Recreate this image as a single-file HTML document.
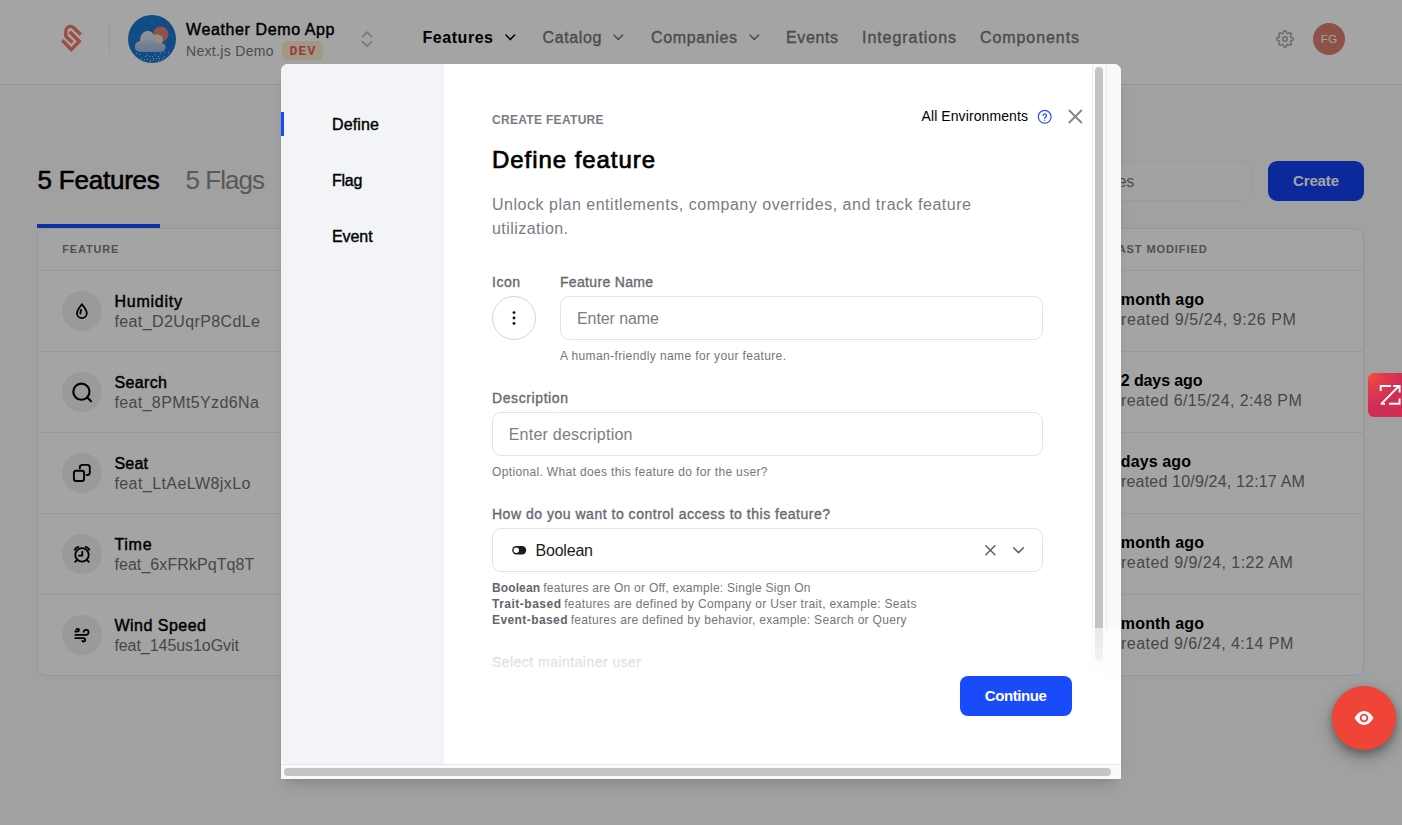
<!DOCTYPE html>
<html lang="en">
<head>
<meta charset="utf-8">
<title>Features</title>
<style>
*{box-sizing:border-box;margin:0;padding:0}
html,body{width:1402px;height:825px;overflow:hidden}
body{font-family:"Liberation Sans",sans-serif;background:#fafafa;color:#000;position:relative}
.abs{position:absolute;white-space:nowrap}
#hdr{position:absolute;left:0;top:0;width:1402px;height:85px;background:#fff;border-bottom:1px solid #e8e9ec}
#tbl{position:absolute;left:37px;top:228px;width:1327px;height:448px;background:#fff;border:1px solid #e9eaed;border-radius:9px}
.rl{position:absolute;left:38px;width:1325px;height:1px;background:#eeeff1}
.ic{position:absolute;left:62px;width:40px;height:40px;border-radius:50%;background:#edeff3}
#ovl{position:absolute;left:0;top:0;width:1402px;height:825px;background:rgba(0,0,0,.356)}
#modal{position:absolute;left:281px;top:64px;width:840px;height:715px;background:#fff;border-radius:7px 7px 0 0;box-shadow:0 10px 15px -6px rgba(0,0,0,.15),0 4px 6px -4px rgba(0,0,0,.1)}
#mclip{position:absolute;left:0;top:0;width:840px;height:715px;border-radius:7px 7px 0 0;overflow:hidden}
#side{position:absolute;left:0;top:0;width:163px;height:700px;background:#f3f4f8;border-radius:0 0 0 6px}
.inp{position:absolute;border:1px solid #e4e4e8;border-radius:9px;background:#fff}
</style>
</head>
<body>
<div id="hdr"></div>
<svg class="abs" style="left:56px;top:20px" width="32" height="36" viewBox="56 20 32 36" fill="none" stroke="#f27a66" stroke-width="3.4" stroke-linejoin="miter"><path d="M80.800 34.600 L73.700 27.700 C71.600 25.900 68.600 26.300 67.100 27.900 C66.100 29.100 65.800 30.100 65.800 32 L65.800 36.300 L72.400 42.600"/><path d="M69.700 31.700 L79.300 41.300 L71.300 49.600 L62.200 40.300"/></svg>
<div class="abs" style="left:109px;top:24px;width:1px;height:29px;background:#e9ecf2"></div>
<svg class="abs" style="left:128px;top:14.7px" width="48" height="48" viewBox="0 0 48 48"><defs><linearGradient id="cg" x1="0" y1="0" x2="0" y2="1"><stop offset="0" stop-color="#e4e6ec"/><stop offset=".4" stop-color="#d3dbea"/><stop offset=".62" stop-color="#b6c8e8"/><stop offset="1" stop-color="#9fb9e4"/></linearGradient></defs><circle cx="24" cy="24" r="24" fill="#1d76d0"/><circle cx="32.7" cy="19.2" r="7.7" fill="#e47e6f"/><circle cx="29.3" cy="24.8" r="5.6" fill="#eadccb"/><path d="M12.500 37 C8.500 37 6.800 34 6.800 31.500 C6.800 28.500 9 26.500 12 26 C12 20 15.500 16 19.500 16 C23.500 16 25.500 18.500 26 21.500 C27 24.500 28.500 27.500 31 28.200 L34.500 28.200 C36.500 28.700 37.500 30.500 37.500 32 C37.500 35 35 37 32 37 Z" fill="url(#cg)"/><g fill="#cbdcf3"><circle cx="8.5" cy="38.5" r=".62"/><circle cx="11.5" cy="39.5" r=".62"/><circle cx="27" cy="39.5" r=".62"/><circle cx="32.5" cy="38.5" r=".62"/><circle cx="37" cy="37.6" r=".62"/><circle cx="40.5" cy="37.6" r=".62"/><circle cx="17.5" cy="41.5" r=".62"/><circle cx="19" cy="40.5" r=".62"/><circle cx="21.5" cy="41.5" r=".62"/><circle cx="24.5" cy="41.5" r=".62"/><circle cx="30.5" cy="41.5" r=".62"/><circle cx="36.5" cy="41.5" r=".62"/><circle cx="13.5" cy="43.5" r=".62"/><circle cx="16.5" cy="44.5" r=".62"/><circle cx="19.5" cy="44.5" r=".62"/><circle cx="22.5" cy="44.8" r=".62"/><circle cx="25.5" cy="43.5" r=".62"/><circle cx="28.5" cy="43.5" r=".62"/><circle cx="31.5" cy="43.5" r=".62"/><circle cx="34.5" cy="43.5" r=".62"/><circle cx="22.5" cy="46.5" r=".62"/><circle cx="25.5" cy="45.5" r=".62"/><circle cx="30.5" cy="45.5" r=".62"/></g></svg>
<div class="abs" style="left:186.0px;top:20.00px;font-size:16px;line-height:20px;color:#000;font-weight:400;letter-spacing:0.611px;-webkit-text-stroke:0.45px #000;">Weather Demo App</div>
<div class="abs" style="left:186.0px;top:42.00px;font-size:14px;line-height:18px;color:#777;letter-spacing:0.325px;">Next.js Demo</div>
<div class="abs" style="left:282px;top:41px;width:41px;height:19px;border-radius:5px;background:#fdecd0;color:#e8604f;font-family:'Liberation Mono',monospace;font-weight:700;font-size:13px;line-height:21px;text-align:center;letter-spacing:1.2px;padding-left:1.2px">DEV</div>
<svg class="abs" style="left:359px;top:28px" width="16" height="22" viewBox="359 28 16 22" fill="none" stroke="#b6bcd4" stroke-width="1.8" stroke-linecap="round" stroke-linejoin="round"><path d="M362.6 36.6 L367 32.2 L371.4 36.6"/><path d="M362.6 41.8 L367 46.2 L371.4 41.8"/></svg>
<div class="abs" style="left:422.5px;top:28.00px;font-size:16px;line-height:20px;color:#000;font-weight:700;letter-spacing:0.544px;">Features</div>
<div class="abs" style="left:542.5px;top:28.00px;font-size:16px;line-height:20px;color:#757575;font-weight:400;letter-spacing:0.642px;-webkit-text-stroke:0.35px #757575;">Catalog</div>
<div class="abs" style="left:651.0px;top:28.00px;font-size:16px;line-height:20px;color:#757575;font-weight:400;letter-spacing:0.634px;-webkit-text-stroke:0.35px #757575;">Companies</div>
<div class="abs" style="left:786.0px;top:28.00px;font-size:16px;line-height:20px;color:#757575;font-weight:400;letter-spacing:0.617px;-webkit-text-stroke:0.35px #757575;">Events</div>
<div class="abs" style="left:862.0px;top:28.00px;font-size:16px;line-height:20px;color:#757575;font-weight:400;letter-spacing:0.945px;-webkit-text-stroke:0.35px #757575;">Integrations</div>
<div class="abs" style="left:980.0px;top:28.00px;font-size:16px;line-height:20px;color:#757575;font-weight:400;letter-spacing:0.920px;-webkit-text-stroke:0.35px #757575;">Components</div>
<svg class="abs" style="left:503.7px;top:33.4px" width="12.6" height="8.6" viewBox="-2 -2 12.6 8.6" fill="none" stroke="#000" stroke-width="1.5" stroke-linecap="round" stroke-linejoin="round"><path d="M0 0 L4.30 4.60 L8.60 0"/></svg>
<svg class="abs" style="left:612.2px;top:33.4px" width="12.6" height="8.6" viewBox="-2 -2 12.6 8.6" fill="none" stroke="#757575" stroke-width="1.5" stroke-linecap="round" stroke-linejoin="round"><path d="M0 0 L4.30 4.60 L8.60 0"/></svg>
<svg class="abs" style="left:747.7px;top:33.4px" width="12.6" height="8.6" viewBox="-2 -2 12.6 8.6" fill="none" stroke="#757575" stroke-width="1.5" stroke-linecap="round" stroke-linejoin="round"><path d="M0 0 L4.30 4.60 L8.60 0"/></svg>
<svg class="abs" style="left:1276.1px;top:29.9px" width="18" height="18" viewBox="0 0 24 24" fill="none" stroke="#a6a6a6" stroke-width="2" stroke-linecap="round" stroke-linejoin="round"><circle cx="12" cy="12" r="3"/><path d="M19.4 15a1.65 1.65 0 0 0 .33 1.82l.06.06a2 2 0 1 1-2.83 2.83l-.06-.06a1.65 1.65 0 0 0-1.82-.33 1.65 1.65 0 0 0-1 1.51V21a2 2 0 0 1-4 0v-.09A1.65 1.65 0 0 0 9 19.4a1.65 1.65 0 0 0-1.82.33l-.06.06a2 2 0 1 1-2.83-2.83l.06-.06a1.65 1.65 0 0 0 .33-1.82 1.65 1.65 0 0 0-1.510-1H3a2 2 0 0 1 0-4h.09A1.65 1.65 0 0 0 4.600 9a1.65 1.65 0 0 0-.33-1.82l-.06-.06a2 2 0 1 1 2.83-2.83l.06.06a1.65 1.65 0 0 0 1.82.33H9a1.65 1.65 0 0 0 1-1.51V3a2 2 0 0 1 4 0v.09a1.65 1.65 0 0 0 1 1.51 1.65 1.65 0 0 0 1.820-.33l.06-.06a2 2 0 1 1 2.83 2.83l-.06.06a1.65 1.65 0 0 0-.33 1.820V9a1.65 1.65 0 0 0 1.510 1H21a2 2 0 0 1 0 4h-.09a1.65 1.65 0 0 0-1.510 1z"/></svg>
<div class="abs" style="left:1313px;top:23px;width:32px;height:32px;border-radius:50%;background:#dc7e6f;color:#fff;font-size:11.5px;line-height:33px;text-align:center;letter-spacing:.5px;padding-left:.5px">FG</div>
<div class="abs" style="left:37.5px;top:164.00px;font-size:26px;line-height:32px;color:#000;font-weight:400;letter-spacing:-0.220px;-webkit-text-stroke:0.6px #000;">5 Features</div>
<div class="abs" style="left:185.5px;top:164.00px;font-size:26px;line-height:32px;color:#8a8a8a;letter-spacing:-0.960px;">5 Flags</div>
<div class="abs" style="left:37px;top:224px;width:123px;height:4px;background:#194bfb"></div>
<div class="abs" style="left:1000px;top:161px;width:252px;height:40px;border-radius:9px;background:#fcfcfd;border:1px solid #f1f2f5"></div>
<div class="abs" style="left:1021.4px;top:172.00px;font-size:16px;line-height:20px;color:#787878;">Search features</div>
<div class="abs" style="left:1268px;top:161px;width:96px;height:40px;border-radius:9px;background:#1240f0"></div>
<div class="abs" style="left:1293.0px;top:171.00px;font-size:15px;line-height:19px;color:#fff;font-weight:700;letter-spacing:-0.138px;">Create</div>
<div id="tbl"></div>
<div class="abs" style="left:62.3px;top:242.00px;font-size:11px;line-height:14px;color:#7d7d7d;font-weight:700;letter-spacing:0.812px;">FEATURE</div>
<div class="abs" style="left:1110.0px;top:242.00px;font-size:11px;line-height:14px;color:#7d7d7d;font-weight:700;letter-spacing:0.921px;">LAST MODIFIED</div>
<div class="rl" style="top:270px"></div>
<div class="rl" style="top:351px"></div>
<div class="rl" style="top:432px"></div>
<div class="rl" style="top:513px"></div>
<div class="rl" style="top:594px"></div>
<div class="rl" style="top:-99px"></div>
<div class="ic" style="top:291px"><svg style="position:absolute;left:0;top:0" width="40" height="40" viewBox="0 0 40 40" fill="none" stroke="#000" stroke-linecap="round" stroke-linejoin="round"><g stroke-width="1.8"><path d="M19.900 13.200 C18 16 15 18.800 15 22.200 a4.900 4.900 0 0 0 9.800 0 C24.800 18.800 21.800 16 19.900 13.200 Z"/><path d="M19.100 18.900 L18.300 22.500"/></g></svg></div>
<div class="abs" style="left:114.4px;top:292.00px;font-size:16px;line-height:20px;color:#000;font-weight:400;letter-spacing:0.767px;-webkit-text-stroke:0.45px #000;">Humidity</div>
<div class="abs" style="left:114.4px;top:312.00px;font-size:16px;line-height:20px;color:#6f6f6f;letter-spacing:0.397px;">feat_D2UqrP8CdLe</div>
<div class="abs" style="left:1107.1px;top:290.00px;font-size:16px;line-height:20px;color:#000;font-weight:700;letter-spacing:0.192px;">1 month ago</div>
<div class="abs" style="left:1108.9px;top:310.00px;font-size:16px;line-height:20px;color:#6f6f6f;letter-spacing:0.573px;">Created 9/5/24, 9:26 PM</div>
<div class="ic" style="top:372px"><svg style="position:absolute;left:0;top:0" width="40" height="40" viewBox="0 0 40 40" fill="none" stroke="#000" stroke-linecap="round" stroke-linejoin="round"><g stroke-width="2.1"><circle cx="19.400" cy="19.700" r="8.100"/><path d="M25.300 25.600 L29 29.300"/></g></svg></div>
<div class="abs" style="left:114.4px;top:373.00px;font-size:16px;line-height:20px;color:#000;font-weight:400;letter-spacing:0.381px;-webkit-text-stroke:0.45px #000;">Search</div>
<div class="abs" style="left:114.4px;top:393.00px;font-size:16px;line-height:20px;color:#6f6f6f;letter-spacing:0.377px;">feat_8PMt5Yzd6Na</div>
<div class="abs" style="left:1112.0px;top:371.00px;font-size:16px;line-height:20px;color:#000;font-weight:700;letter-spacing:-0.111px;">12 days ago</div>
<div class="abs" style="left:1109.0px;top:391.00px;font-size:16px;line-height:20px;color:#6f6f6f;letter-spacing:0.415px;">Created 6/15/24, 2:48 PM</div>
<div class="ic" style="top:453px"><svg style="position:absolute;left:0;top:0" width="40" height="40" viewBox="0 0 40 40" fill="none" stroke="#000" stroke-linecap="round" stroke-linejoin="round"><g stroke-width="1.9"><rect x="11.900" y="17.700" width="10.200" height="10.300" rx="2.300"/><path d="M17.800 15.200 V14.500 a2.600 2.600 0 0 1 2.600 -2.600 H25.200 a2.600 2.600 0 0 1 2.600 2.600 V19.400 a2.600 2.600 0 0 1 -2.600 2.600 H24.500"/></g></svg></div>
<div class="abs" style="left:114.4px;top:454.00px;font-size:16px;line-height:20px;color:#000;font-weight:400;letter-spacing:0.229px;-webkit-text-stroke:0.45px #000;">Seat</div>
<div class="abs" style="left:114.4px;top:474.00px;font-size:16px;line-height:20px;color:#6f6f6f;letter-spacing:0.436px;">feat_LtAeLW8jxLo</div>
<div class="abs" style="left:1107.2px;top:452.00px;font-size:16px;line-height:20px;color:#000;font-weight:700;letter-spacing:0.120px;">7 days ago</div>
<div class="abs" style="left:1109.3px;top:472.00px;font-size:16px;line-height:20px;color:#6f6f6f;letter-spacing:0.179px;">Created 10/9/24, 12:17 AM</div>
<div class="ic" style="top:534px"><svg style="position:absolute;left:0;top:0" width="40" height="40" viewBox="0 0 40 40" fill="none" stroke="#000" stroke-linecap="round" stroke-linejoin="round"><g stroke-width="1.8"><circle cx="20" cy="20.900" r="6.700"/><path d="M16.900 21.600 H20.300 V17.600"/><path d="M12.800 15.700 Q13.900 13.500 16.200 12.900" stroke-width="2"/><path d="M23.800 12.900 Q26.100 13.500 27.200 15.700" stroke-width="2"/><path d="M14.600 26.500 L13.200 27.900"/><path d="M25.400 26.500 L26.800 27.900"/></g></svg></div>
<div class="abs" style="left:114.4px;top:535.00px;font-size:16px;line-height:20px;color:#000;font-weight:400;letter-spacing:0.746px;-webkit-text-stroke:0.45px #000;">Time</div>
<div class="abs" style="left:114.4px;top:555.00px;font-size:16px;line-height:20px;color:#6f6f6f;letter-spacing:0.078px;">feat_6xFRkPqTq8T</div>
<div class="abs" style="left:1107.1px;top:533.00px;font-size:16px;line-height:20px;color:#000;font-weight:700;letter-spacing:0.179px;">1 month ago</div>
<div class="abs" style="left:1109.0px;top:553.00px;font-size:16px;line-height:20px;color:#6f6f6f;letter-spacing:0.472px;">Created 9/9/24, 1:22 AM</div>
<div class="ic" style="top:615px"><svg style="position:absolute;left:0;top:0" width="40" height="40" viewBox="0 0 40 40" fill="none" stroke="#000" stroke-linecap="round" stroke-linejoin="round"><g stroke-width="1.8"><path d="M13.300 16.500 H15.600 a1.350 1.350 0 1 0 -1.100 -2.100"/><path d="M13.300 19.800 H24.100 a2.450 2.450 0 1 0 -2.400 -2.900"/><path d="M13.300 23.200 H21.600 a1.650 1.650 0 1 1 -1.300 2.700"/></g></svg></div>
<div class="abs" style="left:114.4px;top:616.00px;font-size:16px;line-height:20px;color:#000;font-weight:400;letter-spacing:0.493px;-webkit-text-stroke:0.45px #000;">Wind Speed</div>
<div class="abs" style="left:114.4px;top:636.00px;font-size:16px;line-height:20px;color:#6f6f6f;letter-spacing:-0.055px;">feat_145us1oGvit</div>
<div class="abs" style="left:1107.1px;top:614.00px;font-size:16px;line-height:20px;color:#000;font-weight:700;letter-spacing:0.179px;">1 month ago</div>
<div class="abs" style="left:1109.0px;top:634.00px;font-size:16px;line-height:20px;color:#6f6f6f;letter-spacing:0.454px;">Created 9/6/24, 4:14 PM</div>
<div id="ovl"></div>
<div class="abs" style="left:1368px;top:373px;width:40px;height:44px;border-radius:6px;background:radial-gradient(circle at 0 0,#f4503a 0,#e13a4c 30%,#d12e57 55%)"></div>
<svg class="abs" style="left:1378px;top:383px" width="24" height="24" viewBox="1378 383 24 24" fill="none" stroke="#fff" stroke-width="1.9"><path d="M1380.700 391 V386 H1391"/><path d="M1381.300 403.800 L1399 386"/><path d="M1393 386 H1399.600 V392.500" /><path d="M1389 403.800 H1399.600 V398.500"/><path d="M1380.700 403.800 H1385"/></svg>
<div class="abs" style="left:1332px;top:686px;width:64px;height:64px;border-radius:50%;background:#f04438;box-shadow:0 7px 16px rgba(0,0,0,.3),0 3px 7px rgba(0,0,0,.22)"></div>
<svg class="abs" style="left:1352px;top:706px" width="24" height="24" viewBox="0 0 24 24"><path d="M2.500 12 C5 7.300 8.300 5 12 5 s7 2.300 9.500 7 C19 16.700 15.700 19 12 19 S5 16.700 2.500 12Z" fill="#fff"/><circle cx="12" cy="12" r="3.400" fill="none" stroke="#f04438" stroke-width="1.900"/></svg>
<div id="modal"><div id="mclip">
<div id="side"></div>
<div class="abs" style="left:0;top:48px;width:3px;height:24px;background:#194bfb"></div>
<div class="abs" style="left:51.0px;top:51.00px;font-size:16px;line-height:20px;color:#000;font-weight:400;letter-spacing:0.150px;-webkit-text-stroke:0.4px #000;">Define</div>
<div class="abs" style="left:51.0px;top:107.00px;font-size:16px;line-height:20px;color:#000;font-weight:400;letter-spacing:-0.242px;-webkit-text-stroke:0.4px #000;">Flag</div>
<div class="abs" style="left:51.0px;top:163.00px;font-size:16px;line-height:20px;color:#000;font-weight:400;letter-spacing:-0.079px;-webkit-text-stroke:0.4px #000;">Event</div>
<div class="abs" style="left:211.0px;top:49.00px;font-size:12px;line-height:15px;color:#7a7c85;font-weight:700;letter-spacing:0.311px;">CREATE FEATURE</div>
<div class="abs" style="left:211.0px;top:81.00px;font-size:24px;line-height:30px;color:#000;font-weight:400;letter-spacing:0.941px;-webkit-text-stroke:0.7px #000;">Define feature</div>
<div class="abs" style="left:211.0px;top:131.00px;font-size:16px;line-height:20px;color:#7a7c85;letter-spacing:0.519px;">Unlock plan entitlements, company overrides, and track feature</div>
<div class="abs" style="left:211.0px;top:155.00px;font-size:16px;line-height:20px;color:#7a7c85;letter-spacing:0.441px;">utilization.</div>
<div class="abs" style="left:640.5px;top:43.00px;font-size:14px;line-height:18px;color:#000;letter-spacing:0.091px;">All Environments</div>
<svg class="abs" style="left:755px;top:44px" width="18" height="18" viewBox="1036 108 18 18" fill="none" stroke="#2a4bff" stroke-width="1.2" stroke-linecap="round" stroke-linejoin="round"><circle cx="1044.700" cy="116.800" r="6.400"/><path d="M1043.100 115.500 a1.700 1.700 0 1 1 2.400 1.600 c-.55.280-.8.650-.8 1.250"/><path d="M1044.700 120.200 v.1"/></svg>
<svg class="abs" style="left:785px;top:43px" width="18" height="18" viewBox="1066 107 18 18" fill="none" stroke="#858585" stroke-width="1.85" stroke-linecap="round"><path d="M1069.300 110.500 L1081.300 122.500 M1081.300 110.500 L1069.300 122.500"/></svg>
<div class="abs" style="left:211.0px;top:209.00px;font-size:14px;line-height:18px;color:#666a71;font-weight:400;letter-spacing:0.513px;-webkit-text-stroke:0.35px #666a71;">Icon</div>
<div class="abs" style="left:279.0px;top:209.00px;font-size:14px;line-height:18px;color:#666a71;font-weight:400;letter-spacing:0.320px;-webkit-text-stroke:0.35px #666a71;">Feature Name</div>
<div class="abs" style="left:211px;top:232px;width:44px;height:44px;border-radius:50%;border:1px solid #d5d6da;background:#fff"></div>
<svg class="abs" style="left:227px;top:244px" width="12" height="20" viewBox="508 308 12 20" fill="#111"><circle cx="514" cy="312.600" r="1.450"/><circle cx="514" cy="318" r="1.450"/><circle cx="514" cy="323.400" r="1.450"/></svg>
<div class="inp" style="left:279px;top:232px;width:483px;height:44px"></div>
<div class="abs" style="left:296.0px;top:245.00px;font-size:16px;line-height:20px;color:#7a7c85;letter-spacing:-0.079px;">Enter name</div>
<div class="abs" style="left:279.0px;top:285.00px;font-size:12px;line-height:15px;color:#74767d;letter-spacing:0.383px;">A human-friendly name for your feature.</div>
<div class="abs" style="left:211.0px;top:325.00px;font-size:14px;line-height:18px;color:#666a71;font-weight:400;letter-spacing:0.597px;-webkit-text-stroke:0.35px #666a71;">Description</div>
<div class="inp" style="left:211px;top:348px;width:551px;height:44px"></div>
<div class="abs" style="left:227.7px;top:361.00px;font-size:16px;line-height:20px;color:#7a7c85;letter-spacing:0.234px;">Enter description</div>
<div class="abs" style="left:211.0px;top:401.00px;font-size:12px;line-height:15px;color:#74767d;letter-spacing:0.348px;">Optional. What does this feature do for the user?</div>
<div class="abs" style="left:211.0px;top:441.00px;font-size:14px;line-height:18px;color:#666a71;font-weight:400;letter-spacing:0.514px;-webkit-text-stroke:0.35px #666a71;">How do you want to control access to this feature?</div>
<div class="inp" style="left:211px;top:464px;width:551px;height:44px"></div>
<svg class="abs" style="left:229px;top:479px" width="18" height="14" viewBox="510 543 18 14"><rect x="512.200" y="546.100" width="14" height="8.400" rx="4.200" fill="#1c1c1c"/><circle cx="516.300" cy="550.300" r="2.700" fill="#fff"/></svg>
<div class="abs" style="left:254.5px;top:477.00px;font-size:16px;line-height:20px;color:#1c1c1c;letter-spacing:-0.203px;">Boolean</div>
<svg class="abs" style="left:702px;top:479px" width="14" height="14" viewBox="983 543 14 14" fill="none" stroke="#606060" stroke-width="1.450" stroke-linecap="round"><path d="M985.900 545.700 L994.900 554.700 M994.900 545.700 L985.900 554.700"/></svg>
<svg class="abs" style="left:729px;top:479px" width="16" height="14" viewBox="1010 543 16 14" fill="none" stroke="#606060" stroke-width="1.500" stroke-linecap="round" stroke-linejoin="round"><path d="M1013.600 547.700 L1018.500 552.600 L1023.400 547.700"/></svg>
<div class="abs" style="left:211.0px;top:517.00px;font-size:12px;line-height:15px;color:#62656c;font-weight:700;letter-spacing:0.111px;">Boolean</div>
<div class="abs" style="left:262.2px;top:517.00px;font-size:12px;line-height:15px;color:#74767d;letter-spacing:0.262px;">features are On or Off, example: Single Sign On</div>
<div class="abs" style="left:211.0px;top:533.00px;font-size:12px;line-height:15px;color:#62656c;font-weight:700;letter-spacing:0.498px;">Trait-based</div>
<div class="abs" style="left:283.2px;top:533.00px;font-size:12px;line-height:15px;color:#74767d;letter-spacing:0.324px;">features are defined by Company or User trait, example: Seats</div>
<div class="abs" style="left:211.0px;top:549.00px;font-size:12px;line-height:15px;color:#62656c;font-weight:700;letter-spacing:0.415px;">Event-based</div>
<div class="abs" style="left:289.7px;top:549.00px;font-size:12px;line-height:15px;color:#74767d;letter-spacing:0.309px;">features are defined by behavior, example: Search or Query</div>
<div class="abs" style="left:211.0px;top:589.00px;font-size:14px;line-height:18px;color:#666a71;font-weight:400;letter-spacing:0.463px;-webkit-text-stroke:0.35px #666a71;">Select maintainer user</div>
<div class="abs" style="left:811px;top:0;width:15px;height:630px;background:#fafafa;border-left:1px solid #ececec;border-right:1px solid #ececec"></div>
<div class="abs" style="left:826px;top:0;width:14px;height:630px;background:#f9f9f9"></div>
<div class="abs" style="left:814px;top:3px;width:8px;height:594px;border-radius:4px;background:#c4c4c4"></div>
<div class="abs" style="left:163px;top:564px;width:677px;height:72px;background:linear-gradient(to bottom,rgba(255,255,255,.62) 0,rgba(255,255,255,.8) 34px,#fff 58px)"></div>
<div class="abs" style="left:679px;top:612px;width:112px;height:40px;border-radius:8px;background:#194bfb"></div>
<div class="abs" style="left:703.8px;top:622.00px;font-size:15px;line-height:19px;color:#fff;font-weight:700;letter-spacing:-0.427px;">Continue</div>
<div class="abs" style="left:0;top:700px;width:840px;height:15px;background:#fafafa;border-top:1px solid #e8e8e8"></div>
<div class="abs" style="left:3px;top:704px;width:827px;height:8px;border-radius:4px;background:#c4c4c4"></div>
</div></div>
</body>
</html>
